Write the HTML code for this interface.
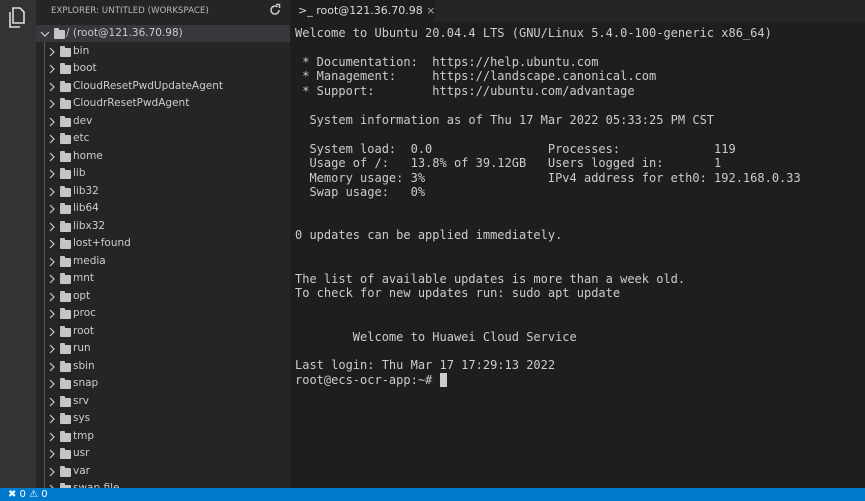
<!DOCTYPE html>
<html><head><meta charset="utf-8"><style>
*{margin:0;padding:0;box-sizing:border-box}
body{width:865px;height:501px;overflow:hidden;background:#1e1e1e;position:relative;font-family:"DejaVu Sans","Liberation Sans",sans-serif}
#act{position:absolute;left:0;top:0;width:36px;height:488px;background:#333}
#side{position:absolute;left:36px;top:0;width:254px;height:488px;background:#252526;color:#ccc;overflow:hidden}
#hdr{height:22px;font-size:8.5px;color:#bbb;padding:6px 0 0 15px;letter-spacing:.1px}
.row{position:absolute;left:0;width:254px;height:17.5px;font-size:10.5px;line-height:17.5px;color:#ccc;white-space:nowrap}
.ch{position:absolute;top:4px}
.fold{position:absolute;top:5px;width:11px;height:9px;background:#c5c5c5;border-radius:1px}
.fold:before{content:"";position:absolute;left:0;top:-2px;width:5px;height:2px;background:#c5c5c5;border-radius:1px 1px 0 0}
#guide{position:absolute;left:8px;top:42px;width:1px;height:450px;background:#585858}
#tabs{position:absolute;left:290px;top:0;width:575px;height:22px;background:#252526}
#tab{position:absolute;left:0;top:0;width:145px;height:22px;background:#1e1e1e;color:#ddd;font-size:11px;line-height:21px;padding-left:8px;white-space:nowrap}
#term{position:absolute;left:295px;top:26px;font-family:"DejaVu Sans Mono","Liberation Mono",monospace;font-size:12px;line-height:14.45px;color:#ccc;white-space:pre}
#status{position:absolute;left:0;top:488px;width:865px;height:13px;background:#007acc;color:#fff;font-size:10px;line-height:13px;padding-left:8px}
</style></head><body>
<div id="act"><svg style="position:absolute;left:7px;top:7px" width="20" height="22" viewBox="0 0 20 22"><path d="M6 1h7l4 4v11H6z" fill="none" stroke="#ddd" stroke-width="1.6"/><path d="M3 5v15h10" fill="none" stroke="#ddd" stroke-width="1.6"/></svg></div>
<div id="side">
<div id="hdr">EXPLORER: UNTITLED (WORKSPACE)</div>
<svg style="position:absolute;left:232px;top:3px" width="14" height="14" viewBox="0 0 14 14"><path d="M11 7a4 4 0 1 1-1.5-3.1" fill="none" stroke="#ccc" stroke-width="1.5"/><path d="M8 1.5h3.5V5" fill="none" stroke="#ccc" stroke-width="1.5"/></svg>
<div class="row" style="top:24.5px;background:#37373d"><svg class="ch" style="left:4px;top:5px" width="10" height="8" viewBox="0 0 10 8"><path d="M1 2l4 4 4-4" fill="none" stroke="#ccc" stroke-width="1.2"/></svg><span class="fold" style="left:18px"></span><span style="position:absolute;left:30px">/ (root@121.36.70.98)</span></div>
<div id="guide"></div>
</div>
<div id="tabs"><div id="tab">&gt;_ root@121.36.70.98 <span style="color:#aaa">×</span></div></div>
<div id="term">Welcome to Ubuntu 20.04.4 LTS (GNU/Linux 5.4.0-100-generic x86_64)

 * Documentation:  https://help.ubuntu.com
 * Management:     https://landscape.canonical.com
 * Support:        https://ubuntu.com/advantage

  System information as of Thu 17 Mar 2022 05:33:25 PM CST

  System load:  0.0                Processes:             119
  Usage of /:   13.8% of 39.12GB   Users logged in:       1
  Memory usage: 3%                 IPv4 address for eth0: 192.168.0.33
  Swap usage:   0%


0 updates can be applied immediately.


The list of available updates is more than a week old.
To check for new updates run: sudo apt update


        Welcome to Huawei Cloud Service

Last login: Thu Mar 17 17:29:13 2022
root@ecs-ocr-app:~# <span style="background:#ccc"> </span></div>
<div id="status">&#10006; 0 &#9888; 0</div>
<script>
var n=["bin","boot","CloudResetPwdUpdateAgent","CloudrResetPwdAgent","dev","etc","home","lib","lib32","lib64","libx32","lost+found","media","mnt","opt","proc","root","run","sbin","snap","srv","sys","tmp","usr","var","swap.file"];
var s=document.getElementById('side');
n.forEach(function(t,i){var d=document.createElement('div');d.className='row';d.style.top=(42.5+i*17.5)+'px';
d.innerHTML='<svg class="ch" style="left:12px" width="8" height="10" viewBox="0 0 8 10"><path d="M2 1l4 4-4 4" fill="none" stroke="#ccc" stroke-width="1.2"/></svg><span class="fold" style="left:24px"></span><span style="position:absolute;left:37px">'+t+'</span>';s.appendChild(d);});
</script>
</body></html>
